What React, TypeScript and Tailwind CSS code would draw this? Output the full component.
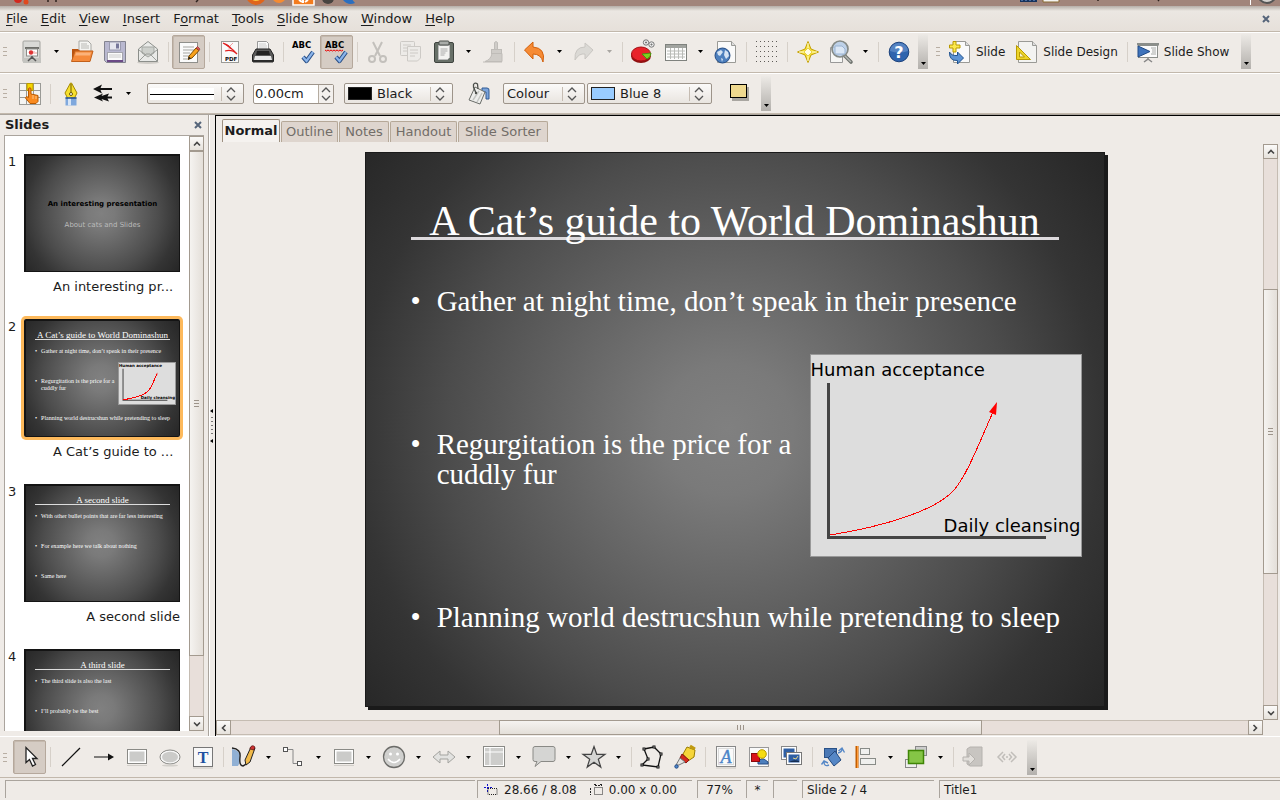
import React, { useState } from 'react';
import type { ReactNode } from 'react';

type IconProps = { children: ReactNode };

function Icon({ children }: IconProps) {
  return (
    <svg viewBox="0 0 24 24" className="size-6 shrink-0 overflow-visible" aria-hidden="true">
      {children}
    </svg>
  );
}

const INK = '#8a8a86';

const icons: Record<string, ReactNode> = {
  newDoc: (
    <>
      <rect x="3" y="1" width="17" height="21" rx="1" fill="#d9d9d6" stroke="#a3a39f" />
      <rect x="3" y="18" width="18" height="5" fill="#c4c4c0" />
      <rect x="5" y="7" width="14" height="2" fill="#6e6e6a" />
      <rect x="6.500" y="9" width="11" height="7" fill="#fff" stroke="#8d8d89" />
      <circle cx="11" cy="12.500" r="2.200" fill="#d33" />
      <path d="M14 11v3M16 12v2" stroke="#e99" />
      <path d="M12 16v2M12 17l-4 4M12 17l4 4" stroke="#555" strokeWidth="1.500" fill="none" />
    </>
  ),
  open: (
    <>
      <path d="M9 1h9l3 3v12H9z" fill="#f4f4f2" stroke="#a8a8a4" />
      <path d="M11 4h6M11 6h8M11 8h8" stroke="#b9b9b5" />
      <path d="M2 11V9h6l2 2v9H2z" fill="#b95310" />
      <path d="M5 11h18l-3 10.500H1.500z" fill="#f58a3b" stroke="#c2601a" />
      <path d="M6 12.500h15l-1 3H5z" fill="#fbb27a" />
    </>
  ),
  save: (
    <>
      <path d="M1.500 1.500h21v21h-19l-2-2z" fill="#b9b8d0" stroke="#83838f" />
      <rect x="6.500" y="2" width="11" height="8" fill="#e6e6ee" stroke="#9a9aae" />
      <rect x="13" y="3.500" width="3" height="5" fill="#77779a" />
      <rect x="4.500" y="12.500" width="15" height="9" fill="#fbfbfb" stroke="#a5a5ad" />
      <path d="M6 15h12M6 17h12" stroke="#ccc" />
      <rect x="4" y="20" width="16" height="2" fill="#6b4a86" />
    </>
  ),
  mail: (
    <>
      <ellipse cx="12" cy="22.500" rx="11" ry="1.500" fill="#cfccc7" />
      <path d="M2.500 9L12 1.500 21.500 9v12.500h-19z" fill="#e9eae8" stroke="#8c8f8b" />
      <path d="M6 7h12v6l-6 4-6-4z" fill="#cdd0cc" stroke="#a5a8a4" />
      <path d="M3 21l7-7h4l7 7M3 10l7 5M21 10l-7 5" stroke="#9b9e9a" fill="none" />
    </>
  ),
  edit: (
    <>
      <rect x="2.500" y="2.500" width="18" height="20" fill="#fafafa" stroke="#8f8f8b" />
      <path d="M6 7h11M6 10h11M6 13h7M6 16h6M6 19h4" stroke="#a5a5a1" />
      <path d="M12 16l7-8 3 2.500-7 7.500-4 1.500z" fill="#f9a11b" stroke="#7a4a00" />
      <path d="M19 8l3 2.500 1-1.500-2.500-2.500z" fill="#d55" stroke="#8a2a2a" strokeWidth=".6" />
      <path d="M11 19.500l1-3 2 2z" fill="#222" />
    </>
  ),
  pdf: (
    <>
      <rect x="3.500" y="1.500" width="17" height="21" fill="#fafafa" stroke="#9a9a96" />
      <path d="M5 3q8 4 14 11-5-5-12-3" fill="none" stroke="#e02020" strokeWidth="1.200" />
      <path d="M15 3q-4 3-4 6" fill="none" stroke="#f0a0a0" />
      <path d="M5 3q7 1 9 7z" fill="#e02020" />
      <text x="7" y="20.500" fontSize="5.500" fontWeight="bold" fontFamily="DejaVu Sans" fill="#111">PDF</text>
    </>
  ),
  print: (
    <>
      <path d="M6.500 11V1.500h9l2 2V11z" fill="#f8f8f8" stroke="#999" />
      <path d="M8 4h7M8 6h8M8 8h8" stroke="#ccc" />
      <path d="M5 9L1.500 15v6.500h21V15L19 9z" fill="#5a5a5a" stroke="#222" />
      <path d="M6 11h12l1 4H5z" fill="#222" />
      <path d="M4 16h16l1 4H3z" fill="#e8e8e8" />
      <rect x="2" y="20" width="20" height="2.500" fill="#2b2b2b" />
    </>
  ),
  spell: (
    <>
      <text x="0" y="8" fontSize="8.500" fontWeight="bold" fontFamily="DejaVu Sans" fill="#000">ABC</text>
      <path d="M11 17l3.500 4L21 12" stroke="#284e86" strokeWidth="4.200" fill="none" strokeLinejoin="round" />
      <path d="M11 17l3.500 4L21 12" stroke="#8ab4ea" strokeWidth="2.200" fill="none" />
    </>
  ),
  cut: (
    <g fill="none" stroke="#c3c0bc">
      <path d="M7 2l7 14M16 2L9 16" strokeWidth="2" />
      <circle cx="6" cy="19" r="3" strokeWidth="2" />
      <circle cx="17" cy="19" r="3" strokeWidth="2" />
    </g>
  ),
  copy: (
    <g fill="#edebe8" stroke="#cdcac6">
      <rect x="1.500" y="1.500" width="14" height="14" rx="1" />
      <path d="M4 5h8M4 8h8M4 11h5" />
      <path d="M8.500 6.500h13V18l-3 3h-10z" />
      <path d="M11 10h8M11 13h8M11 16h5" />
    </g>
  ),
  paste: (
    <>
      <rect x="2.500" y="2.500" width="19" height="20" rx="1.500" fill="#687068" stroke="#3f443f" />
      <path d="M6.500 5.500h11v12l-2 2h-9z" fill="#f3f3f1" stroke="#bbb" />
      <rect x="7" y="1" width="10" height="4" rx="1" fill="#a9aca9" stroke="#4c504c" />
      <path d="M8.500 9h7M8.500 11h7M8.500 13h5M8.500 15h4" stroke="#aaa" />
    </>
  ),
  brush: (
    <g fill="#cfccc8" stroke="#bfbcb8">
      <path d="M12.500 2.500q1.500-2 3 0v7h-3z" />
      <rect x="9.500" y="9.500" width="10" height="4" />
      <path d="M10 13.500h10v8H3q6-2 7-8z" />
      <path d="M1 22h19" />
    </g>
  ),
  undo: (
    <path d="M1.500 10L10 2v5q13 1 10 15-2-8-10-8v5z" fill="#f68b35" stroke="#d2600c" strokeLinejoin="round" />
  ),
  redo: (
    <path d="M20 10L12 3v4Q1 7 2 20q4-7 10-6v5z" fill="#dbd9d5" stroke="#c9c6c2" strokeLinejoin="round" />
  ),
  chart: (
    <>
      <ellipse cx="10" cy="16" rx="10" ry="7" fill="#8f1010" />
      <ellipse cx="10" cy="14" rx="9.500" ry="7" fill="#e8222a" stroke="#a31014" />
      <path d="M11 14l9-1q0 4-4 6z" fill="#7fd01f" stroke="#4c9010" />
      <g fill="#eee" stroke="#777">
        <circle cx="15" cy="2.500" r="2.700" />
        <circle cx="20.500" cy="4.500" r="2.700" />
        <path d="M14.500 2h1v1h-1zM20 4h1v1h-1z" fill="#777" />
      </g>
    </>
  ),
  table: (
    <>
      <rect x="1.500" y="4.500" width="21" height="16" fill="#fdfdfd" stroke="#7f827e" />
      <rect x="2" y="5" width="20" height="3" fill="#a1a39f" />
      <path d="M3 11h18M3 14h18M3 17h18M6.500 8v11M10.500 8v11M14.500 8v11M18.500 8v11" stroke="#b9bbb7" />
    </>
  ),
  web: (
    <>
      <path d="M3.500 1.500h14l4 4v17h-18z" fill="#fafafa" stroke="#9a9a96" />
      <path d="M17.500 1.500v4h4" fill="#ddd" stroke="#9a9a96" />
      <circle cx="8.500" cy="15.500" r="7.500" fill="#4d7fbd" stroke="#244c85" />
      <path d="M3 12l4-2 2 2-3 4-2-1zM11 10l3 2 1 4-3 3-2-4zM7 18l2 1-1 3z" fill="#d5e3f3" />
    </>
  ),
  grid: (
    <g fill="#5e5b57">
      {[1, 6, 11, 16, 21].map((y) =>
        [1, 5, 9, 13, 17, 21].map((x) => <rect key={`${x}-${y}`} x={x} y={y} width="1" height="1" />),
      )}
    </g>
  ),
  star4: (
    <>
      <path d="M12 1.500l3 7.500 7.500 3-7.500 3-3 7.500L9 15l-7.500-3L9 9z" fill="#f7e23c" stroke="#c4a000" strokeLinejoin="round" />
      <path d="M12 3v18M3 12h18" stroke="#fffbd0" />
      <path d="M12 8l4 4-4 4-4-4z" fill="#fffce0" stroke="#dfc21a" strokeWidth=".7" />
    </>
  ),
  zoom: (
    <>
      <path d="M1.500 7.500h12v15h-12z" fill="#f6f6f4" stroke="#999" />
      <path d="M15 15l7 7" stroke="#6d716c" strokeWidth="3.600" strokeLinecap="round" />
      <path d="M15 15l7 7" stroke="#b5b8b4" strokeWidth="1.400" />
      <circle cx="11" cy="9" r="8" fill="#b5cde8" fillOpacity=".85" stroke="#858a86" strokeWidth="1.700" />
      <path d="M6 6h7l3 3v5H6z" fill="#dbe7f5" stroke="#9bb4d2" />
    </>
  ),
  help: (
    <>
      <circle cx="12" cy="12" r="9.800" fill="#2f64ae" stroke="#1c427c" />
      <path d="M3 11a9 8 0 0118 0q-9 3-18 0z" fill="#6f98cf" opacity=".6" />
      <text x="12" y="17.500" fontSize="16" fontWeight="bold" textAnchor="middle" fontFamily="DejaVu Sans" fill="#fff">?</text>
    </>
  ),
  newSlide: (
    <>
      <path d="M5.500 1.500h12l4 4v17h-16z" fill="#fafafa" stroke="#9a9a96" />
      <path d="M17.500 1.500v4h4" fill="#ddd" stroke="#9a9a96" />
      <path d="M5 1.500h3v3.500h4v3H8v4H5V8H1.500V5H5z" fill="#fce94f" stroke="#b99a00" />
      <path d="M1.500 12q2 4 8 3.500V12l6 6-6 6v-3.500Q1 21 1.500 12z" fill="#5d93d3" stroke="#20538f" />
    </>
  ),
  design: (
    <>
      <path d="M3.500 1.500h14l4 4v17h-18z" fill="#f3f3f1" stroke="#9a9a96" />
      <path d="M17.500 1.500v4h4" fill="#ddd" stroke="#9a9a96" />
      <path d="M1.500 5.500v14h14z" fill="#edd42a" stroke="#b99a00" />
      <path d="M4.500 12v5h5z" fill="#faf6d0" stroke="#b99a00" />
    </>
  ),
  show: (
    <>
      <rect x="1" y="3" width="22" height="2.500" fill="#8b8e8a" />
      <rect x="2.500" y="5.500" width="19" height="12" fill="#fbfbfb" stroke="#8b8e8a" />
      <path d="M2 6v11l12-5.500z" fill="#3f73bb" stroke="#204a87" />
      <path d="M15 8h5M16 10h4M16 12h4M15 14h5" stroke="#a8aaa7" />
      <path d="M12 18v1l-4 3M12 19l4 3" stroke="#888" fill="none" strokeWidth="1.500" />
    </>
  ),
  styles: (
    <>
      <rect x="1.500" y="1.500" width="21" height="21" fill="#f4f4f2" stroke="#9a9a96" />
      <path d="M8.500 1v22M15.500 1v22M1 8.500h22M1 15.500h22" stroke="#9a9a96" />
      <rect x="9" y="1.500" width="6" height="7" fill="#f5d600" stroke="#b99a00" />
      <path d="M10.500 6.500q1.500-1.500 2.500 0V12l7 1.500v6L18 21.500h-6L7.500 16l1-1.500 2 1z" fill="#f98a1f" stroke="#b85a00" />
      <path d="M15 13v4M18 14v3" stroke="#fbc58c" />
    </>
  ),
  pen: (
    <>
      <path d="M11.500 1h1l5.500 10-2.500 5h-7L6 11z" fill="#f6df2e" stroke="#a58800" />
      <path d="M12 2v10" stroke="#6b5800" />
      <circle cx="12" cy="12" r="1.500" fill="#fff" stroke="#6b5800" />
      <path d="M6.500 15.500h11v8h-11z" fill="#7fa8dd" />
      <path d="M9 15.500h3v8H9z" fill="#d7e5f6" />
      <path d="M6.500 16h11" stroke="#244c85" strokeWidth="1.500" />
    </>
  ),
  ends: <path d="M1 7l9-4.500L8.500 6H20v2H8.500l1.500 3.500zM2 15.500l9-4-1.500 2.500 7.500-2.500-1.500 3H20v2h-4.500l1.500 3-7.500-2.500 1.500 2.500z" fill="#111" />,
  bucket: (
    <>
      <path d="M15 6h5q2.500 0 2 3v8h-3v-7h-4z" fill="#7ba4dc" stroke="#315b94" />
      <path d="M8 5l10 5-5 12-11-4z" fill="#eeeeec" stroke="#6a6d69" strokeLinejoin="round" />
      <path d="M6 18l6-9M10 20l5-9" stroke="#c4c6c3" strokeWidth="1.500" />
      <path d="M9 11L6.500 5V2.500Q8 0 10.500 2L11 7" fill="none" stroke="#4c4f4b" strokeWidth="1.300" />
      <circle cx="9" cy="11" r="1.200" fill="#4c4f4b" />
    </>
  ),
  shadow: (
    <>
      <rect x="4" y="5" width="17" height="14" fill="#a9a6a1" />
      <rect x="2.500" y="2.500" width="16" height="13" fill="#efd98f" stroke="#000" />
    </>
  ),
  pointer: <path d="M8 2.500v15l3.500-3 3 6.500 3-1.500-3-6H19z" fill="#fff" stroke="#222" strokeWidth="1.300" />,
  line: <path d="M3 21L21 3" stroke="#111" strokeWidth="1.200" />,
  arrow: <path d="M2 11.500h14v-3l6 3.500-6 3.500v-3H2z" fill="#111" />,
  rect: (
    <>
      <rect x="2.500" y="4.500" width="19" height="14" fill="#fff" stroke={INK} />
      <rect x="4.500" y="6.500" width="15" height="10" fill="#cbcbc9" />
      <path d="M2 20.500h20" stroke="#d2cfca" />
    </>
  ),
  ellipse: (
    <>
      <ellipse cx="12" cy="12" rx="10" ry="7" fill="#f7f7f7" stroke={INK} />
      <ellipse cx="12" cy="12" rx="8" ry="5.200" fill="#cbcbc9" />
      <ellipse cx="12" cy="20.500" rx="8" ry="1" fill="#d2cfca" />
    </>
  ),
  text: (
    <>
      <rect x="2.500" y="2.500" width="19" height="19" fill="#f8f8f8" stroke="#777" />
      <text x="12" y="17.500" fontSize="16" fontWeight="bold" textAnchor="middle" fontFamily="Liberation Serif" fill="#2050a0">T</text>
      <path d="M2 23h20" stroke="#cac7c2" />
    </>
  ),
  curve: (
    <>
      <path d="M0 4q8 1 8 8 0 6-2 9H0z" fill="#90b0d4" />
      <path d="M0 3q9 1 8 9-1 9 3 9 3-1 5-5" fill="none" stroke="#222" strokeWidth="1.400" />
      <path d="M13 15l6-13 4 1-5 14-4 3z" fill="#f1ba4a" stroke="#222" />
      <path d="M18 3q2-4 5-1l-1 3-4-1z" fill="#c33" stroke="#511" strokeWidth=".7" />
    </>
  ),
  connector: (
    <g fill="#fff" stroke="#555">
      <path d="M5 4.500h6v14h6" fill="none" stroke="#888" />
      <rect x="1.500" y="2.500" width="4" height="4" />
      <rect x="15.500" y="16.500" width="4" height="4" />
    </g>
  ),
  smile: (
    <>
      <circle cx="12" cy="12" r="10.500" fill="#d0d0ce" stroke="#6c6c69" strokeWidth="1.300" />
      <path d="M6 14q6 7 12 0" fill="none" stroke="#fff" strokeWidth="1.500" />
      <circle cx="8.500" cy="9" r="1.500" fill="#fff" />
      <circle cx="15.500" cy="9" r="1.500" fill="#fff" />
    </>
  ),
  blockArrow: <path d="M1 12l7-6v4h8V6l7 6-7 6v-4H8v4z" fill="#e2e2e0" stroke="#a3a39f" />,
  flow: (
    <>
      <rect x="1.500" y="1.500" width="21" height="20" fill="#fff" stroke="#8a8a86" />
      <rect x="3" y="3" width="18" height="17" fill="#cdcdcb" />
      <path d="M8 2v19M2 7h20" stroke="#fff" />
    </>
  ),
  callout: (
    <path d="M3 1.500h18q2 0 2 2v11q0 2-2 2H9l-6 5 2-5H3q-2 0-2-2v-11q0-2 2-2z" fill="#d5d5d3" stroke="#8a8a86" />
  ),
  star5: (
    <path d="M12 1.500l2.700 7.800h8.300l-6.700 4.900 2.500 7.900L12 17.200l-6.800 4.900 2.500-7.900L1 9.300h8.300z" fill="#d5d5d3" stroke="#444" strokeWidth="1.200" />
  ),
  polygon: (
    <g stroke="#111" fill="none">
      <path d="M4 4l10-2 7 7-3 13-16-2 6-6z" strokeWidth="1.300" />
      <g fill="#fff">
        <rect x="3" y="3" width="2" height="2" /><rect x="13" y="1" width="2" height="2" /><rect x="20" y="8" width="2" height="2" />
        <rect x="17" y="21" width="2" height="2" /><rect x="1" y="19" width="2" height="2" /><rect x="7" y="13" width="2" height="2" />
      </g>
    </g>
  ),
  glue: (
    <>
      <path d="M10 9l4-7 8 3-1 7-6 4z" fill="#f6d53a" stroke="#9a7d00" />
      <path d="M17 1l5 3" stroke="#c09a10" strokeWidth="3" />
      <path d="M9 9l7 6-3 3-6-5z" fill="#d42a1e" stroke="#8a1510" />
      <path d="M7 13l5 4-6 3-3 0z" fill="#e4e4e2" stroke="#777" />
      <circle cx="3.500" cy="21.500" r="1.700" fill="#4d86cc" stroke="#244c85" />
    </>
  ),
  fontwork: (
    <>
      <rect x="2.500" y="1.500" width="19" height="20" fill="#fafafa" stroke="#888" />
      <rect x="4.500" y="3.500" width="15" height="16" fill="none" stroke="#bbb" strokeDasharray="1 1" />
      <text x="12" y="18" fontSize="18" fontStyle="italic" textAnchor="middle" fontFamily="Liberation Serif" fill="#4b84c8" stroke="#4b84c8" strokeWidth=".4">A</text>
      <path d="M2 23h20" stroke="#cac7c2" />
    </>
  ),
  fromFile: (
    <>
      <rect x="2.500" y="2.500" width="19" height="19" fill="#fafafa" stroke="#999" />
      <path d="M11 19v-2l3-3h3l4 3v2z" fill="#4d7fbd" stroke="#244c85" />
      <rect x="4.500" y="8.500" width="8" height="8" fill="#d8131a" stroke="#8a0a0e" />
      <circle cx="15" cy="9" r="4.300" fill="#f6dc10" stroke="#b99a00" />
    </>
  ),
  gallery: (
    <>
      <rect x="1.500" y="1.500" width="15" height="13" fill="#fff" stroke="#888" />
      <rect x="3.500" y="3.500" width="11" height="9" fill="#2f5fa3" />
      <rect x="6.500" y="7.500" width="15" height="12" fill="#fff" stroke="#777" />
      <rect x="8.500" y="9.500" width="11" height="8" fill="#2f5fa3" />
      <path d="M9 17q5-3 10-1v1z" fill="#142d52" />
      <path d="M13 13l3 1 2-3" stroke="#e4d58a" fill="none" />
    </>
  ),
  rotate: (
    <>
      <rect x="3.500" y="3.500" width="12" height="9" fill="#4a78b5" stroke="#2a5288" />
      <path d="M14 6l6 9-7 6-6-8z" fill="#5587c6" stroke="#24497d" />
      <path d="M17 8q4-1 4-4M17.500 6l3.500-3 2.500 4.500M8 20q-5 2-5-3M.5 19.500l2.500-3.500 4 2" fill="none" stroke="#5587c6" strokeWidth="1.400" />
    </>
  ),
  align: (
    <>
      <path d="M3 1v22" stroke="#c45e00" strokeWidth="3" />
      <path d="M3.500 1v22" stroke="#ff9c3a" />
      <rect x="6.500" y="3.500" width="9" height="6" fill="#f0f0ee" stroke="#888b87" />
      <rect x="6.500" y="13.500" width="15" height="6" fill="#f0f0ee" stroke="#888b87" />
    </>
  ),
  arrange: (
    <>
      <rect x="11.500" y="1.500" width="11" height="9" fill="#ccc" stroke="#888" />
      <rect x="1.500" y="14.500" width="11" height="8" fill="#eee" stroke="#888" />
      <rect x="4.500" y="5.500" width="15" height="13" fill="#85c546" stroke="#3f8505" strokeWidth="1.500" />
    </>
  ),
  extrude: (
    <g fill="#c8c5c1" stroke="#b5b2ae">
      <path d="M5 4l3-2h12v19H8l-3-2z" />
      <path d="M1 12h6V8l6 6-6 6v-4H1z" fill="#e2dfdb" />
    </g>
  ),
  interact: (
    <g fill="none" stroke="#c1beba" strokeWidth="1.500">
      <path d="M8 7l-5 5 5 5M16 7l5 5-5 5M10 9l-2.500 3L10 15M14 9l2.500 3L14 15M11 12h2" />
    </g>
  ),
};

function Tool({ icon, label, active, disabled, children }: { icon: string; label: string; active?: boolean; disabled?: boolean; children?: ReactNode }) {
  return (
    <button
      type="button"
      aria-label={label}
      aria-pressed={active}
      disabled={disabled}
      className={`flex h-[34px] w-[33px] shrink-0 items-center justify-center rounded-xs border ${
        active ? 'border-[#b5a89c] bg-[#d5ccc4] shadow-[inset_1px_1px_0_#c4b9ae]' : 'border-transparent'
      }`}
    >
      <Icon>
        {icons[icon]}
        {children}
      </Icon>
    </button>
  );
}

function Drop({ label, dim }: { label: string; dim?: boolean }) {
  return (
    <button type="button" aria-label={label} className="flex h-[34px] w-[17px] shrink-0 items-center justify-center">
      <svg viewBox="0 0 5 3" className="h-[3px] w-[5px]" aria-hidden="true">
        <path d="M0 0h5L2.500 3z" fill={dim ? '#a9a6a2' : '#000'} />
      </svg>
    </button>
  );
}

const Sep = () => (
  <div className="flex w-2 shrink-0 justify-center">
    <div className="h-5 w-px bg-[#d6d0c9]" />
  </div>
);

const Grip = ({ narrow }: { narrow?: boolean }) => (
  <div className={`flex shrink-0 flex-col gap-[3px] pl-[3px] ${narrow ? 'w-[13px]' : 'w-[15px]'}`}>
    <div className="h-px w-1 bg-[#b8aea3]" />
    <div className="h-px w-1 bg-[#b8aea3]" />
    <div className="h-px w-1 bg-[#b8aea3]" />
  </div>
);

const Overflow = ({ label }: { label: string }) => (
  <button
    type="button"
    aria-label={label}
    className="flex h-[35px] w-[10px] shrink-0 items-end justify-center bg-linear-to-b from-[#edeae6] to-[#b3b0ac] pb-1"
  >
    <svg viewBox="0 0 5 3" className="h-[3px] w-[5px]" aria-hidden="true">
      <path d="M0 0h5L2.500 3z" fill="#000" />
    </svg>
  </button>
);

const Arrows = () => (
  <svg viewBox="0 0 10 14" className="h-[14px] w-[10px]" fill="none" stroke="#555" strokeWidth="1.300" aria-hidden="true">
    <path d="M1 5l4-4 4 4M1 9l4 4 4-4" />
  </svg>
);

type ComboProps = { label: string; options: string[]; className: string; pad: string; children?: ReactNode };

function Combo({ label, options, className, pad, children }: ComboProps) {
  return (
    <div className={`relative shrink-0 ${className}`}>
      <select
        aria-label={label}
        className={`h-[21px] w-full appearance-none rounded-xs border border-[#9d948a] bg-linear-to-b from-[#fbfaf9] to-[#e9e5e0] text-[13px] leading-4 text-[#1c1c1c] ${pad}`}
      >
        {options.map((o) => (
          <option key={o} aria-label={o || 'Continuous'}>{o}</option>
        ))}
      </select>
      {children}
      <span className="pointer-events-none absolute top-1 right-2 flex h-[14px] items-center border-l border-[#c5bcb2] pl-1">
        <Arrows />
      </span>
    </div>
  );
}

const menus: [string, string, string][] = [
  ['', 'F', 'ile'],
  ['', 'E', 'dit'],
  ['', 'V', 'iew'],
  ['', 'I', 'nsert'],
  ['F', 'o', 'rmat'],
  ['', 'T', 'ools'],
  ['', 'S', 'lide Show'],
  ['', 'W', 'indow'],
  ['', 'H', 'elp'],
];

const Close = () => (
  <svg viewBox="0 0 8 8" className="size-2" aria-hidden="true">
    <path d="M1 1l6 6M7 1L1 7" stroke="#56657a" strokeWidth="2" />
  </svg>
);

function DesktopPanel() {
  return (
    <div className="flex h-[6px] shrink-0 justify-between overflow-hidden bg-[#a1857b]">
      <svg viewBox="0 0 360 6" className="h-[6px] w-[360px]" aria-hidden="true">
        <circle cx="18" cy="-1" r="4" fill="#d2281e" />
        <circle cx="26" cy="2" r="2.500" fill="#e0481e" />
        <path d="M48 0v2M56 0v2M198 0l-2 2" stroke="#2b211d" strokeWidth="1.500" />
        <circle cx="256" cy="-5" r="10" fill="#e0651b" />
        <circle cx="256" cy="-6" r="7" fill="#f9c440" />
        <circle cx="279" cy="-4" r="7" fill="#f58b32" />
        <rect x="293" y="-9" width="21" height="14" fill="#f37b1d" stroke="#fff" strokeWidth="1.500" />
        <path d="M303 0v3M299 0l3 2M308 0l-3 2" stroke="#fff" strokeWidth="2" />
        <circle cx="328" cy="-2" r="6" fill="#474340" />
        <path d="M343 0q5 6 12 3l-4-5z" fill="#2b6fc0" />
      </svg>
      <svg viewBox="0 0 270 6" className="h-[6px] w-[270px]" aria-hidden="true">
        <rect x="10" y="-8" width="17" height="10" fill="#16325c" />
        <path d="M12 1v-3M16 1v-3M20 1v-3M24 1v-3" stroke="#7aa6e0" />
        <path d="M33 -6h16v8H33z" fill="#f2f2f0" stroke="#8a6a30" />
        <path d="M88 0v1M149 0l-1 1" stroke="#2b211d" strokeWidth="1.500" />
        <path d="M240.500 0v5" stroke="#fff" />
        <circle cx="257" cy="-6" r="9" fill="#d5d2cf" stroke="#555" strokeWidth="2" />
      </svg>
    </div>
  );
}

const SLIDE_BG = 'bg-[radial-gradient(circle_farthest-corner_at_49%_50%,#808080_0%,#7a7a7a_14%,#4c4c4c_60%,#343434_80%,#262626_100%)]';

function Curve({ width = 1 }: { width?: number }) {
  return (
    <svg viewBox="0 0 270 201" className="absolute inset-0 size-full" aria-hidden="true">
      <path d="M17.500 28v154.500H235" fill="none" stroke="#444" strokeWidth={width > 1 ? 5 : 3} />
      <path d="M19 180C70 172 125 156 143 135C157 119 170 83 183 55" fill="none" stroke="#f00" strokeWidth={width} shapeRendering="crispEdges" />
      <path d="M186 47l-8 10 7 3z" fill="#f00" />
    </svg>
  );
}

function Thumb({ title, bullets, chart }: { title: string; bullets: string[]; chart?: boolean }) {
  return (
    <div className="relative h-full px-[9px] pt-2 font-['Liberation_Serif',serif] text-white">
      <div className="h-[11px] border-b border-[#ddd] text-center text-[9px] leading-[12px] whitespace-nowrap">{title}</div>
      <ul className="flex flex-col gap-[23px] pt-2 text-[6px] leading-[7px]">
        {bullets.map((b) => (
          <li key={b} className="flex gap-1 whitespace-pre">
            <span>•</span>
            <span>{b}</span>
          </li>
        ))}
      </ul>
      {chart && (
        <div className="absolute top-[41px] left-[92px] h-[43px] w-[58px] border border-[#999] bg-[#ddd] font-['DejaVu_Sans',sans-serif] text-[4px] leading-[5px] font-bold text-black">
          <Curve width={5} />
          <span className="relative">Human acceptance</span>
          <span className="absolute right-0 bottom-1">Daily cleansing</span>
        </div>
      )}
    </div>
  );
}

type Slide = { caption?: string; clipped?: boolean; body: ReactNode };

const slides: Slide[] = [
  {
    caption: 'An interesting pr...',
    clipped: true,
    body: (
      <div className="flex h-full flex-col items-center justify-center gap-3 pt-[3px] text-[7px] leading-[9px] whitespace-nowrap">
        <b className="text-black">An interesting presentation</b>
        <span className="text-[#bbb]">About cats and Slides</span>
      </div>
    ),
  },
  {
    caption: 'A Cat’s guide to ...',
    clipped: true,
    body: (
      <Thumb
        title="A Cat’s guide to World Dominashun"
        bullets={[
          'Gather at night time, don’t speak in their presence',
          'Regurgitation is the price for a\ncuddly fur',
          'Planning world destrucshun while pretending to sleep',
        ]}
        chart
      />
    ),
  },
  {
    caption: 'A second slide',
    body: (
      <Thumb
        title="A second slide"
        bullets={['With other bullet points that are far less interesting', 'For example here we talk about nothing', 'Same here']}
      />
    ),
  },
  {
    body: <Thumb title="A third slide" bullets={['The third slide is also the last', 'I’ll probably be the best']} />,
  },
];

function ScrollButton({ label, d }: { label: string; d: string }) {
  return (
    <button
      type="button"
      aria-label={label}
      className="flex size-[15px] shrink-0 items-center justify-center border border-[#a39a8f] bg-linear-to-b from-[#fbfaf9] to-[#e6e2dc]"
    >
      <svg viewBox="0 0 8 8" className="size-2" fill="none" stroke="#444" strokeWidth="1.600" aria-hidden="true">
        <path d={d} />
      </svg>
    </button>
  );
}

const UP = 'M1 5.500l3-3 3 3';
const DOWN = 'M1 2.500l3 3 3-3';
const LEFT = 'M5.500 1l-3 3 3 3';
const RIGHT = 'M2.500 1l3 3-3 3';

function VScroll({ before, thumb, after }: { before: string; thumb: string; after: string }) {
  return (
    <div className="flex w-[15px] shrink-0 flex-col">
      <ScrollButton label="Scroll up" d={UP} />
      <div className={`border-x border-[#c5bcb2] bg-[#e8dfda] ${before}`} />
      <div className={`flex flex-col items-center justify-center gap-[2px] border border-[#a39a8f] bg-linear-to-r from-[#f5f3f0] to-[#e4dfd9] ${thumb}`}>
        <div className="h-px w-[5px] bg-[#9d948a]" />
        <div className="h-px w-[5px] bg-[#9d948a]" />
        <div className="h-px w-[5px] bg-[#9d948a]" />
      </div>
      <div className={`border-x border-[#c5bcb2] bg-[#e8dfda] ${after}`} />
      <ScrollButton label="Scroll down" d={DOWN} />
    </div>
  );
}

const views = ['Normal', 'Outline', 'Notes', 'Handout', 'Slide Sorter'];
const tabWidths = ['w-[58px]', 'w-[57px]', 'w-[50px]', 'w-[67px]', 'w-[90px]'];

const BAR = 'flex h-[41px] shrink-0 items-center border-t border-t-white border-b border-b-[#c2b8ac] bg-[#efebe7]';
const CELL = 'flex items-center border-t border-l border-[#aaa49d] whitespace-nowrap';

export default function App() {
  const [view, setView] = useState('Normal');
  const [selected, setSelected] = useState(1);

  return (
    <div className="flex h-screen flex-col overflow-hidden bg-[#efebe7] font-['DejaVu_Sans',sans-serif] text-[13px] leading-4 text-[#1c1c1c]">
      <DesktopPanel />
      <nav aria-label="Menu" className="flex h-[26px] shrink-0 items-center gap-[13px] border-b border-[#c2b8ac] bg-linear-to-b from-[#b5aea8] via-[#ebe7e2] via-20% to-[#e6e0da] pr-[10px] pl-[6px]">
        {menus.map(([a, u, b]) => (
          <button key={a + u + b} type="button" className="whitespace-nowrap">
            {a}<span className="underline underline-offset-2">{u}</span>{b}
          </button>
        ))}
        <button type="button" aria-label="Close document" className="ml-auto"><Close /></button>
      </nav>

      <div role="toolbar" aria-label="Standard" className={`${BAR} pb-[2px] text-[12px]`}>
        <Grip />
        <Tool icon="newDoc" label="New" /><Drop label="New options" />
        <Tool icon="open" label="Open" /><Tool icon="save" label="Save" /><Tool icon="mail" label="E-mail" /><Sep />
        <Tool icon="edit" label="Edit File" active /><Sep />
        <Tool icon="pdf" label="Export as PDF" /><Tool icon="print" label="Print" /><Sep />
        <Tool icon="spell" label="Spellcheck" />
        <Tool icon="spell" label="AutoSpellcheck" active>
          <path d="M0 10l1.500 1 1.500-1 1.500 1 1.500-1 1.500 1 1.500-1 1.500 1 1.500-1 1.500 1 1.500-1 1.500 1 1.500-1" fill="none" stroke="#e00" />
        </Tool>
        <Sep />
        <Tool icon="cut" label="Cut" disabled /><Tool icon="copy" label="Copy" disabled /><Tool icon="paste" label="Paste" /><Drop label="Paste options" />
        <Tool icon="brush" label="Format Paintbrush" disabled /><Sep />
        <Tool icon="undo" label="Undo" /><Drop label="Undo list" />
        <Tool icon="redo" label="Redo" disabled /><Drop label="Redo list" dim /><Sep />
        <Tool icon="chart" label="Chart" /><Tool icon="table" label="Table" /><Drop label="Table options" /><Tool icon="web" label="Hyperlink" /><Sep />
        <Tool icon="grid" label="Display Grid" /><Sep />
        <Tool icon="star4" label="Navigator" /><Tool icon="zoom" label="Zoom" /><Drop label="Zoom options" /><Sep />
        <Tool icon="help" label="Help" />
        <div className="w-[3px] shrink-0" />
        <Overflow label="More standard tools" />
        <div className="w-[5px] shrink-0" />
        <Grip />
        <button type="button" className="flex shrink-0 items-center gap-1 whitespace-nowrap"><Icon>{icons.newSlide}</Icon>Slide</button>
        <button type="button" className="ml-[10px] flex shrink-0 items-center gap-1 whitespace-nowrap"><Icon>{icons.design}</Icon>Slide Design</button>
        <div className="w-[6px] shrink-0" />
        <Sep />
        <button type="button" className="ml-1 flex shrink-0 items-center gap-1 whitespace-nowrap"><Icon>{icons.show}</Icon>Slide Show</button>
        <div className="w-3 shrink-0" />
        <Overflow label="More presentation tools" />
      </div>

      <div role="toolbar" aria-label="Line and Filling" className={BAR}>
        <Grip narrow />
        <Tool icon="styles" label="Styles and Formatting" />
        <Sep />
        <Tool icon="pen" label="Line" /><Tool icon="ends" label="Arrow Style" /><Drop label="Arrow style options" />
        <div className="w-[10px] shrink-0" />
        <Combo label="Line Style" options={['']} className="w-[97px]" pad="">
          <span className="pointer-events-none absolute top-[5px] left-[3px] flex h-3 w-16 items-center bg-white">
            <span className="h-px w-full bg-black" />
          </span>
        </Combo>
        <div className="ml-[9px] flex h-[20px] w-[81px] shrink-0 rounded-xs border border-[#9d948a] bg-white">
          <input aria-label="Line Width" defaultValue="0.00cm" className="w-[64px] min-w-0 pl-px outline-none" />
          <button type="button" aria-label="Change line width" className="flex flex-1 items-center justify-center border-l border-[#b5aca1] bg-[#f3f0ed]"><Arrows /></button>
        </div>
        <Combo label="Line Colour" options={['Black']} className="ml-[10px] w-[109px]" pad="pl-8">
          <span className="pointer-events-none absolute top-1 left-1 h-[13px] w-6 border border-[#222] bg-black" />
        </Combo>
        <div className="w-[9px] shrink-0" />
        <Tool icon="bucket" label="Area" />
        <Combo label="Fill Type" options={['Colour']} className="ml-2 w-[82px]" pad="pl-[3px]" />
        <Combo label="Fill Colour" options={['Blue 8']} className="ml-[2px] w-[125px]" pad="pl-8">
          <span className="pointer-events-none absolute top-1 left-1 h-[13px] w-6 border border-[#222] bg-[#99ccff]" />
        </Combo>
        <div className="w-[11px] shrink-0" />
        <Tool icon="shadow" label="Shadow" />
        <div className="w-[5px] shrink-0" />
        <Overflow label="More line tools" />
      </div>

      <div className="flex min-h-0 flex-1 border-t border-[#aaa49d]">
        <aside className="flex w-[209px] shrink-0 flex-col border-r border-[#aaa49d] pr-1 pb-[5px] pl-1">
          <header className="flex h-5 shrink-0 items-center justify-between pr-[2px] pl-px">
            <h2 className="text-[13px] font-bold">Slides</h2>
            <button type="button" aria-label="Close panel"><Close /></button>
          </header>
          <div className="flex min-h-0 flex-1 border-t border-l border-[#aaa49d]">
            <ol className="flex min-w-0 flex-1 flex-col overflow-hidden bg-white pt-[18px]">
              {slides.map((s, i) => (
                <li key={i} className="flex h-[165px] shrink-0">
                  <span className="w-[19px] shrink-0 pl-[3px]">{i + 1}</span>
                  <div className="w-[156px]">
                    <button
                      type="button"
                      aria-label={`Slide ${i + 1}`}
                      onClick={() => setSelected(i)}
                      className={`block h-[118px] w-[156px] overflow-hidden border border-t-2 border-l-2 border-[#141414] text-left ${SLIDE_BG} ${
                        selected === i ? 'rounded-xs ring-3 ring-[#fdb95b]' : ''
                      }`}
                    >
                      {s.body}
                    </button>
                    {s.caption && (
                      <div className={`ml-auto w-[127px] pt-[7px] whitespace-nowrap ${s.clipped ? 'text-left' : 'text-right'}`}>{s.caption}</div>
                    )}
                  </div>
                </li>
              ))}
            </ol>
            <VScroll before="h-0" thumb="flex-[506]" after="flex-[60]" />
          </div>
        </aside>
        <div className="flex w-[6px] shrink-0 flex-col items-start justify-center border-l border-white">
          <svg viewBox="0 0 4 34" className="h-[34px] w-1" aria-hidden="true">
            <path d="M3 0v4L0 2zM3 30v4l-3-2z" fill="#000" />
            <path d="M2 8v20" stroke="#000" strokeDasharray="1 3" />
          </svg>
        </div>

        <main className="flex min-w-0 flex-1 flex-col border-t border-l border-black pb-px">
          <div className="flex min-h-0 flex-1">
            <div className="flex min-w-0 flex-1 flex-col">
              <div role="tablist" aria-label="Views" className="flex h-[26px] shrink-0 items-end gap-px pl-[6px]">
                {views.map((v, i) => (
                  <button
                    key={v}
                    type="button"
                    role="tab"
                    aria-selected={view === v}
                    onClick={() => setView(v)}
                    className={`flex items-center justify-center rounded-t-xs border border-b-0 whitespace-nowrap ${tabWidths[i]} ${
                      view === v
                        ? 'h-[23px] border-[#9d8f80] bg-[#f5f2ef] font-bold'
                        : 'h-[21px] border-[#b5a898] bg-[#ded5ce] text-[#726d68]'
                    }`}
                  >
                    {v}
                  </button>
                ))}
              </div>
              <div className="flex min-h-0 flex-1 justify-center overflow-hidden pt-[10px] pr-[10px]">
                <section className={`relative h-[555px] w-[740px] shrink-0 border border-[#1a1a1a] px-[45px] pt-11 font-['Liberation_Serif',serif] text-white shadow-[3px_3px_0_#1a1a1a] ${SLIDE_BG}`}>
                  <h1 className="h-[43px] border-b-3 border-[#dddadd] text-center text-[42px] leading-[48px] whitespace-nowrap">
                    A Cat’s guide to World Dominashun
                  </h1>
                  <ul className="flex flex-col gap-[113px] pt-[46px] text-[29px] leading-[30px]">
                    <li className="flex gap-4 whitespace-nowrap"><span>•</span>Gather at night time, don’t speak in their presence</li>
                    <li className="flex gap-4"><span>•</span><span className="w-[360px]">Regurgitation is the price for a cuddly fur</span></li>
                    <li className="flex gap-4 whitespace-nowrap"><span>•</span>Planning world destrucshun while pretending to sleep</li>
                  </ul>
                  <div className="absolute top-[201px] left-[444px] h-[203px] w-[272px] border border-[#999] bg-[#ddd] font-['DejaVu_Sans',sans-serif] text-[18px] leading-[30px] whitespace-nowrap text-black">
                    <Curve />
                    <span className="relative">Human acceptance</span>
                    <span className="absolute right-0 bottom-[15px]">Daily cleansing</span>
                  </div>
                </section>
              </div>
            </div>
            <div className="flex w-[17px] shrink-0 pt-[28px]">
              <VScroll before="flex-[131]" thumb="flex-[284]" after="flex-[132]" />
            </div>
          </div>
          <div className="flex h-[15px] shrink-0 pr-[17px]">
            <ScrollButton label="Scroll left" d={LEFT} />
            <div className="flex-[269] border-y border-[#c5bcb2] bg-[#e8dfda]" />
            <div className="flex flex-[481] items-center justify-center gap-[2px] border border-[#a39a8f] bg-linear-to-b from-[#f5f3f0] to-[#e4dfd9]">
              <div className="h-[5px] w-px bg-[#9d948a]" />
              <div className="h-[5px] w-px bg-[#9d948a]" />
              <div className="h-[5px] w-px bg-[#9d948a]" />
            </div>
            <div className="flex-[267] border-y border-[#c5bcb2] bg-[#e8dfda]" />
            <ScrollButton label="Scroll right" d={RIGHT} />
          </div>
        </main>
      </div>

      <div role="toolbar" aria-label="Drawing" className="flex h-[42px] shrink-0 items-center border-t border-t-white border-b border-b-[#c2b8ac]">
        <Grip narrow />
        <Tool icon="pointer" label="Select" active /><Sep />
        <Tool icon="line" label="Line" /><Tool icon="arrow" label="Arrow" /><Tool icon="rect" label="Rectangle" /><Tool icon="ellipse" label="Ellipse" /><Tool icon="text" label="Text" /><Sep />
        <Tool icon="curve" label="Curve" /><Drop label="Curve options" />
        <Tool icon="connector" label="Connector" /><Drop label="Connector options" />
        <Tool icon="rect" label="Basic Shapes" /><Drop label="Basic shape options" />
        <Tool icon="smile" label="Symbol Shapes" /><Drop label="Symbol shape options" />
        <Tool icon="blockArrow" label="Block Arrows" /><Drop label="Block arrow options" />
        <Tool icon="flow" label="Flowcharts" /><Drop label="Flowchart options" />
        <Tool icon="callout" label="Callouts" /><Drop label="Callout options" />
        <Tool icon="star5" label="Stars" /><Drop label="Star options" /><Sep />
        <Tool icon="polygon" label="Points" /><Tool icon="glue" label="Glue Points" /><Sep />
        <Tool icon="fontwork" label="Fontwork Gallery" /><Tool icon="fromFile" label="From File" /><Tool icon="gallery" label="Gallery" /><Sep />
        <Tool icon="rotate" label="Rotate" /><Tool icon="align" label="Alignment" /><Drop label="Alignment options" />
        <Tool icon="arrange" label="Arrange" /><Drop label="Arrange options" /><Sep />
        <Tool icon="extrude" label="Extrusion" disabled /><Tool icon="interact" label="Interaction" disabled />
        <div className="w-1 shrink-0" />
        <Overflow label="More drawing tools" />
      </div>

      <footer className="flex h-[22px] shrink-0 gap-[5px] pt-[2px] pb-[2px] pl-[5px] text-[12px]">
        <div className={`mr-[-3px] flex-1 ${CELL}`} />
        <div className={`w-[215px] gap-[6px] pl-[6px] ${CELL}`}>
          <svg viewBox="0 0 14 12" className="h-3 w-[14px]" fill="none" aria-hidden="true">
            <path d="M3.500 0v8M0 3.500h8" stroke="#11c" strokeDasharray="2 1" />
            <path d="M4 4.500h9v6H4z" stroke="#222" strokeDasharray="1 1" />
          </svg>
          <span>28.66 / 8.08</span>
          <svg viewBox="0 0 14 12" className="ml-[6px] h-3 w-[14px]" fill="none" aria-hidden="true">
            <path d="M5.500 3.500h8v7h-8z" stroke="#222" strokeDasharray="1 1" />
            <path d="M1.500 4v7M5 .5h2M11 .5h2M6 1.500h7" stroke="#222" strokeDasharray="2 1" />
          </svg>
          <span>0.00 x 0.00</span>
        </div>
        <div className={`w-[44px] justify-center ${CELL}`}>77%</div>
        <div className={`w-[22px] justify-center ${CELL}`}>*</div>
        <div className={`w-[24px] ${CELL}`} />
        <div className={`w-[132px] pl-1 ${CELL}`}>Slide 2 / 4</div>
        <div className={`w-[341px] pl-1 ${CELL}`}>Title1</div>
      </footer>
    </div>
  );
}
